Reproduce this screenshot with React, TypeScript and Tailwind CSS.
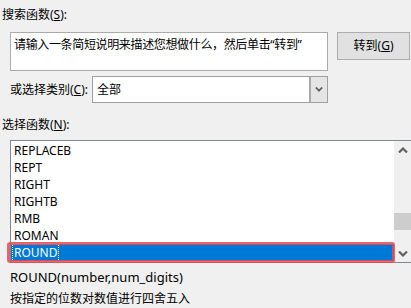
const FONT = "font-['Noto_Sans','Noto_Sans_CJK_SC',sans-serif]";

const ITEMS = ["REPLACEB", "REPT", "RIGHT", "RIGHTB", "RMB", "ROMAN", "ROUND"];

function Chevron({ up = false, className = "" }: { up?: boolean; className?: string }) {
  return (
    <svg width="10" height="6" viewBox="0 0 10 6" className={className}>
      <polyline
        points={up ? "1,5.5 5,1.5 9,5.5" : "1,0.5 5,4.5 9,0.5"}
        fill="none"
        stroke="#606060"
        strokeWidth="2.2"
      />
    </svg>
  );
}

export default function App() {
  return (
    <div className={`${FONT} relative w-[411px] h-[308px] overflow-hidden bg-[#f0f0f0] text-[12px] leading-[16px] text-[#000]`}>
      {/* Search */}
      <div className="pt-[7px] pl-[2px] h-[23px]">
        搜索函数(<span className="underline">S</span>):
      </div>
      <div className="mt-[9px] flex items-start">
        <div className="ml-[10px] w-[318px] h-[39px] bg-white border border-[#ababab] pl-[3px] pt-[4px] whitespace-nowrap tracking-[-0.35px]">
          请输入一条简短说明来描述您想做什么，然后单击“转到”
        </div>
        <button className="ml-[9px] w-[73px] h-[28px] bg-[#e1e1e1] border border-[#adadad] flex items-center justify-center">
          转到(<span className="underline">G</span>)
        </button>
      </div>

      {/* Category */}
      <div className="mt-[5px] flex items-center">
        <span className="ml-[10px] w-[82px]">
          或选择类别(<span className="underline">C</span>):
        </span>
        <div className="w-[236px] h-[27px] bg-white border border-[#a0a0a0] flex">
          <span className="flex-1 pl-[4px] flex items-center">全部</span>
          <div className="w-[18px] h-full bg-[#e5e5e5] border-l-2 border-[#a9a9a9] flex items-center justify-center">
            <Chevron className="w-[8px] h-[5px]" />
          </div>
        </div>
      </div>

      {/* Function list */}
      <div className="mt-[14px] pl-[2px] h-[16px]">
        选择函数(<span className="underline">N</span>):
      </div>
      <div className="mt-[7px] ml-[10px] w-[410px] h-[123px] border border-[#828790] bg-white flex">
        <div className="w-[383px] pt-[1px] relative">
          {ITEMS.map((name) => {
            const selected = name === "ROUND";
            return (
              <div
                key={name}
                className={`h-[17px] pl-[3px] flex items-center ${selected ? "bg-[#0078d7] text-white" : ""}`}
              >
                <span className={selected ? "outline outline-1 outline-dotted outline-white -ml-[1px] pl-[1px]" : ""}>
                  {name}
                </span>
              </div>
            );
          })}
          {/* red highlight overlay */}
          <div className="absolute left-[-4px] top-[101px] w-[388px] h-[21px] rounded-[3px] border-[3px] border-[#ea4a50]/85" />
        </div>
        <div className="w-[17px] h-full bg-[#f0f0f0] flex flex-col items-center justify-between">
          <div className="h-[17px] flex items-center justify-center">
            <Chevron up />
          </div>
          <div className="flex-1 w-full flex flex-col justify-end pb-[15px]">
            <div className="w-full h-[17px] bg-[#cdcdcd]" />
          </div>
          <div className="h-[17px] flex items-center justify-center">
            <Chevron />
          </div>
        </div>
      </div>

      {/* Description */}
      <div className="mt-[5px] pl-[10px] h-[17px] flex items-center text-[13px]">ROUND(number,num_digits)</div>
      <div className="mt-[5px] pl-[10px] h-[17px] flex items-center">按指定的位数对数值进行四舍五入</div>
    </div>
  );
}
